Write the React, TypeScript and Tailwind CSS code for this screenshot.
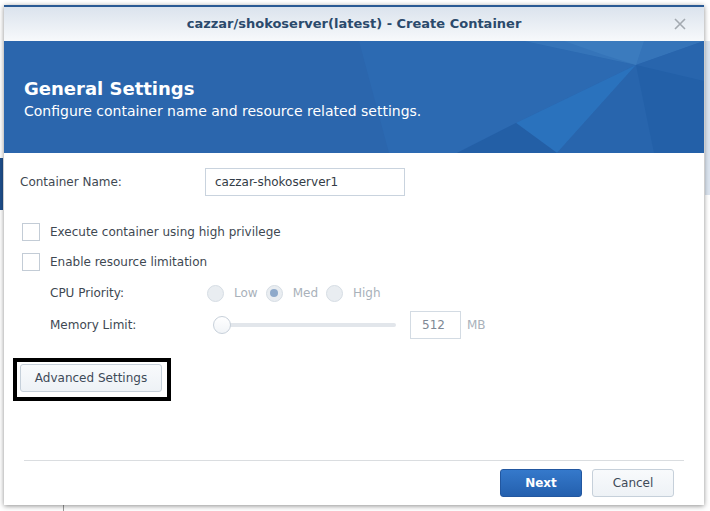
import React from "react";

const font = { fontFamily: '"DejaVu Sans", Verdana, sans-serif' };

function Checkbox({ label }: { label: string }) {
  return (
    <div className="flex items-center h-[30px]">
      <div className="w-[18px] h-[18px] border border-[#c3ccd6] bg-white ml-[18px]" />
      <span className="ml-[10px] text-[12px] text-[#3e4852]">{label}</span>
    </div>
  );
}

function Radio({ label, checked }: { label: string; checked?: boolean }) {
  return (
    <div className="flex items-center">
      <div className="w-[17px] h-[17px] rounded-full border border-[#d6dde4] bg-[#e9edf1] flex items-center justify-center">
        {checked && <div className="w-[8px] h-[8px] rounded-full bg-[#8ea9ca]" />}
      </div>
      <span className="ml-[10px] text-[12px] text-[#a9b1ba]">{label}</span>
    </div>
  );
}

function BannerArt() {
  return (
    <svg className="absolute inset-0" width="700" height="112" viewBox="0 0 700 112">
      <rect width="700" height="112" fill="#2b66ad" />
      <polygon points="355,0 520,0 632,24 512,82 453,112 385,112" fill="#2c6ab2" />
      <polygon points="520,0 700,0 632,24" fill="#3574b9" />
      <polygon points="560,0 640,0 632,24 600,14" fill="#3b7bbe" />
      <polygon points="512,82 632,24 553,112" fill="#2a72bd" />
      <polygon points="453,112 512,82 553,112" fill="#235fa6" />
      <polygon points="632,24 700,0 700,112 553,112" fill="#2865ad" />
      <polygon points="632,24 700,40 700,112 650,112" fill="#2360a8" />
    </svg>
  );
}

export default function App() {
  return (
    <div className="w-[710px] h-[511px] bg-white relative overflow-hidden" style={font}>
      {/* page behind the dialog */}
      <div className="absolute left-0 top-[158px] w-[3px] h-[52px] bg-[#1e4f8c]" />
      <div className="absolute right-0 top-[41px] w-[5px] h-[154px] bg-[#dbe4ef]" />
      <div className="absolute left-[63px] top-[505px] w-px h-[6px] bg-[#9a9a9a]" />

      <div className="ml-[4px] mt-[5px] w-[700px] h-[500px] bg-white flex flex-col relative shadow-[0_1px_5px_rgba(0,0,0,0.45)]">
        {/* title bar */}
        <div className="h-[36px] border-t-2 border-[#2a5a94] bg-gradient-to-b from-[#dbe3ed] to-[#f7f9fb] flex items-center justify-center relative">
          <span className="text-[13px] font-bold text-[#2b4a6c]">
            cazzar/shokoserver(latest) - Create Container
          </span>
          <svg className="absolute right-[18px] top-[11px]" width="12" height="12" viewBox="0 0 12 12">
            <path d="M1 1L11 11M11 1L1 11" stroke="#a3a9b0" strokeWidth="1.6" />
          </svg>
        </div>

        {/* banner */}
        <div className="h-[112px] relative overflow-hidden">
          <BannerArt />
          <div className="relative pl-[20px] pt-[37px] text-white">
            <div className="text-[18px] font-bold leading-[22px]">General Settings</div>
            <div className="text-[14px] leading-[20px] mt-[1px]">Configure container name and resource related settings.</div>
          </div>
        </div>

        {/* body */}
        <div className="flex-1 flex flex-col">
          <div className="flex items-center mt-[15px] h-[28px]">
            <span className="ml-[16px] w-[185px] text-[12px] text-[#3e4852]">Container Name:</span>
            <div className="w-[200px] h-[28px] border border-[#c9d3de] flex items-center pl-[9px] text-[12px] text-[#333c46]">
              cazzar-shokoserver1
            </div>
          </div>

          <div className="mt-[21px]">
            <Checkbox label="Execute container using high privilege" />
            <Checkbox label="Enable resource limitation" />
          </div>

          <div className="flex items-center h-[32px]">
            <span className="ml-[46px] w-[157px] text-[12px] text-[#3e4852]">CPU Priority:</span>
            <div className="flex items-center gap-[8px]">
              <Radio label="Low" />
              <Radio label="Med" checked />
              <Radio label="High" />
            </div>
          </div>

          <div className="flex items-center h-[32px]">
            <span className="ml-[46px] w-[163px] text-[12px] text-[#3e4852]">Memory Limit:</span>
            <div className="relative w-[186px] h-[18px] flex items-center">
              <div className="ml-[9px] w-[174px] h-[4px] rounded-full bg-[#e2e6eb]" />
              <div className="absolute left-0 top-0 w-[18px] h-[18px] rounded-full border border-[#c7d0da] bg-gradient-to-b from-white to-[#f1f4f7]" />
            </div>
            <div className="ml-[11px] w-[51px] h-[28px] border border-[#d3dbe3] flex items-center pl-[11px] text-[12px] text-[#7d8794]">
              512
            </div>
            <span className="ml-[6px] text-[12px] text-[#a9b1ba]">MB</span>
          </div>

          <div className="mt-[17px] ml-[9px] w-[158px] h-[43px] border-4 border-black pl-[3px] pt-[2px]">
            <button className="w-[142px] h-[28px] rounded-[3px] border border-[#c6d0da] bg-gradient-to-b from-[#f8fafc] to-[#eef2f6] text-[12px] text-[#3e4a58]">
              Advanced Settings
            </button>
          </div>

          <div className="mt-auto mx-[20px] border-t border-[#dadde0]" />
          <div className="flex justify-end gap-[10px] pr-[30px] pt-[8px] pb-[8px]">
            <button className="w-[82px] h-[28px] rounded-[3px] bg-gradient-to-b from-[#3579cb] to-[#2460ae] border border-[#2257a0] text-white text-[12px] font-bold">
              Next
            </button>
            <button className="w-[82px] h-[28px] rounded-[3px] border border-[#c6d0da] bg-gradient-to-b from-[#f8fafc] to-[#eef2f6] text-[12px] text-[#3e4a58]">
              Cancel
            </button>
          </div>
        </div>
      </div>
    </div>
  );
}
